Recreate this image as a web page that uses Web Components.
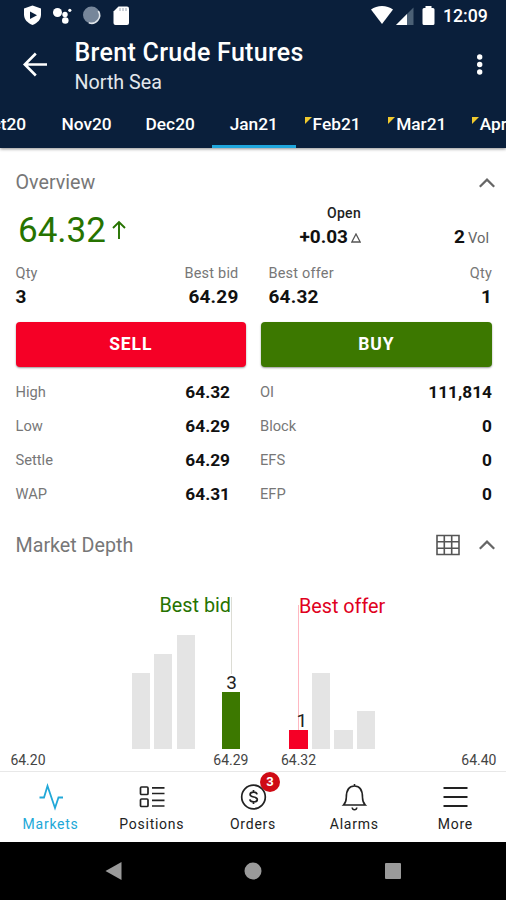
<!DOCTYPE html>
<html lang="en">
<head>
<meta charset="utf-8">
<title>Brent Crude Futures</title>
<style>
  body {
    margin: 0;
    background: #fff;
    font-family: Roboto, "Liberation Sans", sans-serif;
  }
</style>
</head>
<body>
<trading-screen></trading-screen>

<script>
const define = (name, html, setup) => {
  const template = document.createElement('template');
  template.innerHTML = html;

  customElements.define(name, class extends HTMLElement {
    constructor() {
      super();
      this.attachShadow({ mode: 'open' });
      this.shadowRoot.append(template.content.cloneNode(true));
    }

    connectedCallback() {
      if (setup) {
        setup(this, this.shadowRoot);
      }
    }
  });
};

define('status-bar', `
<style>
  :host {
    display: flex;
    align-items: center;
    height: 32px;
    color: #fff;
  }
  svg { display: block; }
  time {
    width: 63px;
    font-size: 17.7px;
    font-weight: 500;
    line-height: 32px;
  }
  .gap { flex: 1; }
</style>
<svg width="140" height="32" viewBox="0 0 140 32">
  <path d="M32.5 5.5 41 8.5v6c0 5-3.5 8.5-8.5 10.5-5-2-8.5-5.5-8.5-10.5v-6z" fill="#fff"/>
  <path d="M30 11.500v7.500l7-3.700z" fill="#0a1f3b"/>
  <g fill="#fff">
    <circle cx="57.500" cy="12.500" r="4.500"/><circle cx="65" cy="14.500" r="2.700"/>
    <circle cx="65.300" cy="20.500" r="3.300"/><circle cx="69.800" cy="10.300" r="1.600"/>
    <path d="M118.500 6.500H127a2 2 0 0 1 2 2V23a2 2 0 0 1-2 2h-11.500a2 2 0 0 1-2-2V11.500z"/>
  </g>
  <circle cx="91.500" cy="15" r="8.500" fill="#76869a"/>
  <path d="M98.300 11a8 8 0 0 1-9.500 11.800" fill="none" stroke="#dfe4e9" stroke-width="1.600"/>
  <path d="M120 8v3M123 8v3M126 8v3" stroke="#9aa5b3" stroke-width="1"/>
</svg>
<span class="gap"></span>
<svg width="75" height="32" viewBox="368 0 75 32">
  <path d="M371 9.500C377 4.700 387 4.700 393 9.500L382 24z" fill="#fff"/>
  <path d="M413.500 7.500V25H396z" fill="#4b6075"/>
  <path d="M407 14v11H396z" fill="#fff"/>
  <path d="M425.500 6h6v2h1.500a1.500 1.500 0 0 1 1.500 1.500V23.500a1.500 1.500 0 0 1-1.500 1.500h-9a1.500 1.500 0 0 1-1.500-1.500V9.500A1.500 1.500 0 0 1 424 8h1.500z" fill="#fff"/>
</svg>
<time>12:09</time>`);

define('app-bar', `
<style>
  :host {
    display: flex;
    height: 70px;
    color: #fff;
  }
  .titles { flex: 1; }
  h1 {
    margin: 7px 0 0;
    font-size: 25px;
    font-weight: 500;
    line-height: 28px;
    letter-spacing: 0.3px;
    white-space: nowrap;
  }
  p {
    margin: 0;
    font-size: 19.7px;
    line-height: 31px;
    color: #e3e7ec;
  }
  svg { display: block; }
</style>
<svg width="74.5" height="70" viewBox="0 32 74.5 70" fill="none" stroke="#fff" stroke-width="2.600">
  <path d="M47 64.500H25M35.800 53.500 24.800 64.500l11 11"/>
</svg>
<div class="titles">
  <h1><slot></slot></h1>
  <p><slot name="subtitle"></slot></p>
</div>
<svg width="52" height="70" viewBox="454 32 52 70" fill="#fff">
  <circle cx="479.700" cy="57" r="2.700"/><circle cx="479.700" cy="64.500" r="2.700"/><circle cx="479.700" cy="72" r="2.700"/>
</svg>`);

define('contract-tab', `
<style>
  :host {
    display: flex;
    flex: none;
    justify-content: center;
    box-sizing: border-box;
    width: 83.6px;
    height: 46px;
    border-bottom: 3px solid transparent;
    color: #fff;
    font-size: 17.3px;
    font-weight: 500;
    line-height: 45px;
  }
  :host([selected]) { border-color: #1fa6dc; }
  :host([flagged]) {
    justify-content: flex-start;
    padding-left: 9px;
  }
  svg { display: none; margin: 15px 1px 0 0; }
  :host([flagged]) svg { display: block; }
</style>
<svg width="7" height="7"><path d="M0 0h7L0 7z" fill="#f0c92e"/></svg>
<slot></slot>`);

define('contract-tabs', `
<style>
  :host {
    display: flex;
    justify-content: flex-start;
    height: 46px;
    overflow: hidden;
  }
  ::slotted(:first-child) { margin-left: -38.800px; }
</style>
<slot></slot>`);

define('panel-header', `
<style>
  :host {
    display: flex;
    align-items: center;
    height: 35px;
    padding: 0 11px 0 15.5px;
    color: #777;
    font-size: 19.7px;
  }
  span { flex: 1; }
  svg { display: block; fill: none; stroke: #666; }
</style>
<span><slot></slot></span>
<slot name="action"></slot>
<svg width="16" height="10" stroke-width="2.200"><path d="M.8 8.700 8 1.600l7.200 7.100"/></svg>`);

define('price-summary', `
<style>
  :host {
    display: flex;
    height: 62px;
    padding: 0 17px 0 18px;
  }
  .last {
    flex: 1;
    color: #267300;
    font-size: 35px;
    line-height: 61px;
  }
  .last svg { margin: 0 0 2px 6px; }
  .change { width: 120px; text-align: right; }
  .open {
    height: 25px;
    font-size: 14px;
    font-weight: 500;
    line-height: 27px;
    letter-spacing: 0.3px;
    color: #222;
  }
  .row { line-height: 24px; font-size: 19px; font-weight: 700; color: #111; }
  .volume { width: 128px; padding-top: 25px; text-align: right; }
  .unit { margin-left: 3px; font-size: 14.7px; font-weight: 400; color: #666; }
</style>
<div class="last"><slot name="last"></slot><svg width="14" height="20" fill="none" stroke="#267300" stroke-width="1.900"><path d="M7 19V2M1 8l6-6 6 6"/></svg></div>
<div class="change">
  <div class="open">Open</div>
  <div class="row"><slot name="change"></slot><svg width="10" height="10" style="margin-left:3px" fill="none" stroke="#555" stroke-width="1.300"><path d="M5 1 9.200 9H.8z"/></svg></div>
</div>
<div class="volume row"><slot name="volume"></slot><span class="unit">Vol</span></div>`);

define('quote-cell', `
<style>
  :host {
    display: block;
    color: #111;
    font-size: 19px;
    font-weight: 700;
    line-height: 24px;
    letter-spacing: 0.2px;
  }
  :host([end]) { text-align: right; }
  .label {
    color: #777;
    font-size: 14.5px;
    font-weight: 400;
    line-height: 23px;
  }
</style>
<div class="label"></div>
<slot></slot>`, (host, root) => {
  root.querySelector('.label').textContent = host.getAttribute('label');
});

define('trade-button', `
<style>
  :host { display: block; }
  button {
    display: block;
    width: 100%;
    height: 44.500px;
    padding: 0;
    border: 0;
    border-radius: 4px;
    background: var(--side);
    box-shadow: 0 1px 2px rgba(0, 0, 0, .4);
    color: #fff;
    font: 700 17.500px/45px Roboto, "Liberation Sans", sans-serif;
    letter-spacing: 0.9px;
  }
</style>
<button type="button"><slot></slot></button>`);

define('stat-row', `
<style>
  :host {
    display: flex;
    justify-content: space-between;
    height: 34.1px;
    line-height: 33px;
  }
  .label { color: #777; font-size: 14.7px; }
  .value { color: #111; font-size: 17.300px; font-weight: 700; }
</style>
<span class="label"></span>
<span class="value"><slot></slot></span>`, (host, root) => {
  root.querySelector('.label').textContent = host.getAttribute('label');
});

// One column per tick; the first is 64.20 and the last 64.40.
const DEPTH = [
  { tick: 5, size: 4 },
  { tick: 6, size: 5 },
  { tick: 7, size: 6 },
  { tick: 9, size: 3, side: 'bid', label: 'Best bid' },
  { tick: 12, size: 1, side: 'offer', label: 'Best offer' },
  { tick: 13, size: 4 },
  { tick: 14, size: 1 },
  { tick: 15, size: 2 },
];
const AXIS = [0, 9, 12, 20];

define('depth-chart', `
<style>
  :host { display: block; padding: 0 15.5px 0 16.7px; }
  .plot, .axis {
    display: grid;
    grid-template-columns: repeat(21, 22.560px);
    justify-items: center;
  }
  .plot { height: 186px; align-items: end; }
  .plot > div {
    grid-row: 1;
    position: relative;
    width: 18.300px;
    background: #e4e4e4;
  }
  .plot > .bid { background: #3c7800; }
  .plot > .offer { background: #f50026; }
  .size {
    position: absolute;
    bottom: 100%;
    left: 4.5px;
    font-size: 19px;
    line-height: 18px;
    color: #222;
  }
  .offer .size { left: 7px; }
  .line { position: absolute; width: 1px; left: 9px; }
  .bid .line { bottom: 75px; height: 77px; background: #dcdcd4; }
  .offer .line { bottom: 19px; height: 125px; left: 9px; background: #ffb8c2; }
  .callout {
    position: absolute;
    font-size: 19.8px;
    line-height: 24px;
    white-space: nowrap;
  }
  .bid .callout { right: 9px; bottom: 131px; color: #267300; }
  .offer .callout { left: 9.5px; bottom: 130px; color: #e00020; }
  .axis {
    height: 22px;
    font-size: 14px;
    line-height: 22px;
    color: #444;
  }
  .axis span { grid-row: 1; display: flex; justify-content: center; width: 0; }
</style>
<div class="plot"></div>
<div class="axis"></div>`, (host, root) => {
  root.querySelector('.plot').innerHTML = DEPTH.map(({ tick, size, side, label }) => {
    const details = side
      ? `<i class="line"></i><span class="callout">${label}</span><span class="size">${size}</span>`
      : '';
    return `<div class="${side || ''}" style="grid-column:${tick + 1};height:${size * 18.9}px">${details}</div>`;
  }).join('');
  root.querySelector('.axis').innerHTML = AXIS.map((tick) =>
    `<span style="grid-column:${tick + 1}">${(64.2 + tick / 100).toFixed(2)}</span>`).join('');
});

define('nav-item', `
<style>
  :host {
    display: flex;
    flex: 1;
    flex-direction: column;
    align-items: center;
    color: #222;
    font-size: 14px;
    line-height: 20px;
    letter-spacing: 0.75px;
  }
  :host([active]) { color: #21a8d8; }
  .icon { position: relative; height: 28px; margin: 11px 0 3px; }
  .badge {
    position: absolute;
    top: -11px;
    left: 21px;
    width: 20px;
    height: 20px;
    border-radius: 50%;
    background: #cf0a14;
    color: #fff;
    font-size: 13px;
    font-weight: 700;
    letter-spacing: 0;
    text-align: center;
  }
  .badge:empty { display: none; }
</style>
<div class="icon"><slot name="icon"></slot><div class="badge"></div></div>
<slot></slot>`, (host, root) => {
  root.querySelector('.badge').textContent = host.getAttribute('badge') || '';
});

define('bottom-nav', `
<style>
  :host {
    display: flex;
    box-sizing: border-box;
    height: 71px;
    border-top: 1px solid #e8e8e8;
  }
</style>
<slot></slot>`);

define('system-nav', `
<style>
  :host {
    display: flex;
    align-items: center;
    justify-content: space-around;
    height: 58px;
    padding: 0 43px;
    background: #000;
  }
</style>
<svg width="18" height="18" fill="#9a9a9a"><path d="M17.500 0v18L1.500 9z"/></svg>
<svg width="18" height="18" fill="#9a9a9a"><circle cx="9" cy="9" r="8.500"/></svg>
<svg width="18" height="18" fill="#9a9a9a"><rect x="1" y="1" width="16" height="16" rx="1"/></svg>`);

define('trading-screen', `
<style>
  :host {
    display: flex;
    flex-direction: column;
    width: 506px;
    height: 900px;
    overflow: hidden;
  }
  header {
    height: 148px;
    background: #0a1f3b;
    box-shadow: 0 1px 3px rgba(0, 0, 0, .45);
  }
  main { flex: 1; padding-top: 17px; }
  .quotes, .trade, .stats { display: grid; }
  .quotes {
    grid-template-columns: 111px 112px 112px 111px;
    grid-template-rows: 60px;
    padding: 0 14px 0 15.500px;
    height: 60px;
  }
  .quotes > :nth-child(3) { margin-left: 30px; }
  .quotes > :nth-child(4) { margin-right: -30.500px; }
  .trade {
    grid-template-columns: 1fr 1fr;
    gap: 15px;
    padding: 0 14.500px 0 15.500px;
    height: 53.500px;
  }
  .stats {
    grid-template-columns: 214.500px 232px;
    column-gap: 30px;
    padding: 0 14px 0 15.500px;
    height: 152px;
  }
  .table-icon { margin-right: 19.5px; }
  svg { display: block; }
  svg.line { fill: none; stroke: currentColor; stroke-width: 1.700; }
</style>
<header>
  <status-bar></status-bar>
  <app-bar>Brent Crude Futures<span slot="subtitle">North Sea</span></app-bar>
  <contract-tabs>
    <contract-tab>Oct20</contract-tab>
    <contract-tab>Nov20</contract-tab>
    <contract-tab>Dec20</contract-tab>
    <contract-tab selected>Jan21</contract-tab>
    <contract-tab flagged>Feb21</contract-tab>
    <contract-tab flagged>Mar21</contract-tab>
    <contract-tab flagged>Apr21</contract-tab>
  </contract-tabs>
</header>
<main>
  <panel-header>Overview</panel-header>
  <price-summary>
    <span slot="last">64.32</span>
    <span slot="change">+0.03</span>
    <span slot="volume">2</span>
  </price-summary>
  <div class="quotes">
    <quote-cell label="Qty">3</quote-cell>
    <quote-cell label="Best bid" end>64.29</quote-cell>
    <quote-cell label="Best offer">64.32</quote-cell>
    <quote-cell label="Qty" end>1</quote-cell>
  </div>
  <div class="trade">
    <trade-button style="--side:#f50026">SELL</trade-button>
    <trade-button style="--side:#3c7800">BUY</trade-button>
  </div>
  <div class="stats">
    <div>
      <stat-row label="High">64.32</stat-row>
      <stat-row label="Low">64.29</stat-row>
      <stat-row label="Settle">64.29</stat-row>
      <stat-row label="WAP">64.31</stat-row>
    </div>
    <div>
      <stat-row label="OI">111,814</stat-row>
      <stat-row label="Block">0</stat-row>
      <stat-row label="EFS">0</stat-row>
      <stat-row label="EFP">0</stat-row>
    </div>
  </div>
  <panel-header>Market Depth
    <svg slot="action" class="line table-icon" width="24" height="22" style="stroke-width:1.600;color:#555">
      <path d="M1 1.500h22v19H1zM8.300 1.500v19M15.700 1.500v19M1 7.800h22M1 14.200h22"/>
    </svg>
  </panel-header>
  <depth-chart></depth-chart>
</main>
<bottom-nav>
  <nav-item active>
    <svg slot="icon" class="line" width="28" height="28" style="stroke-width:1.800"><path d="M2.500 14.500h4.500L10.500 3l7.500 22 3.500-10.500h4.500"/></svg>Markets
  </nav-item>
  <nav-item>
    <svg slot="icon" class="line" width="28" height="28">
      <rect x="2.500" y="4" width="7.500" height="7.500" rx="1"/><rect x="2.500" y="16" width="7.500" height="7.500" rx="1"/>
      <path d="M14 4.800h12.500M14 10.500h12.500M14 17.300h12.500M14 23h12.500"/>
    </svg>Positions
  </nav-item>
  <nav-item badge="3">
    <svg slot="icon" class="line" width="28" height="28">
      <circle cx="14.500" cy="14" r="11.800"/>
      <path d="M18.100 11.400C17.700 9.800 16.400 9.200 14.600 9.200c-2 0-3.500.8-3.500 2.400 0 3.500 7.200 1.300 7.200 4.800 0 1.600-1.600 2.400-3.600 2.400-2.100 0-3.600-.8-3.900-2.500M14.500 7v2.200M14.500 18.800V21"/>
    </svg>Orders
  </nav-item>
  <nav-item>
    <svg slot="icon" class="line" width="28" height="28" style="stroke-width:1.600">
      <path d="M3.500 22c2-2 2.800-4 2.800-7.500C6.300 7.500 9 3 14.500 3s8 4.500 8 11.500c0 3.500.8 5.500 2.800 7.500zM14.500 1v2M12.200 24.500c.3 3 4.300 3 4.600 0"/>
    </svg>Alarms
  </nav-item>
  <nav-item>
    <svg slot="icon" class="line" width="28" height="28" style="stroke-width:2"><path d="M2.500 5h24M2.500 14h24M2.500 23h24"/></svg>More
  </nav-item>
</bottom-nav>
<system-nav></system-nav>`);
</script>
</body>
</html>
